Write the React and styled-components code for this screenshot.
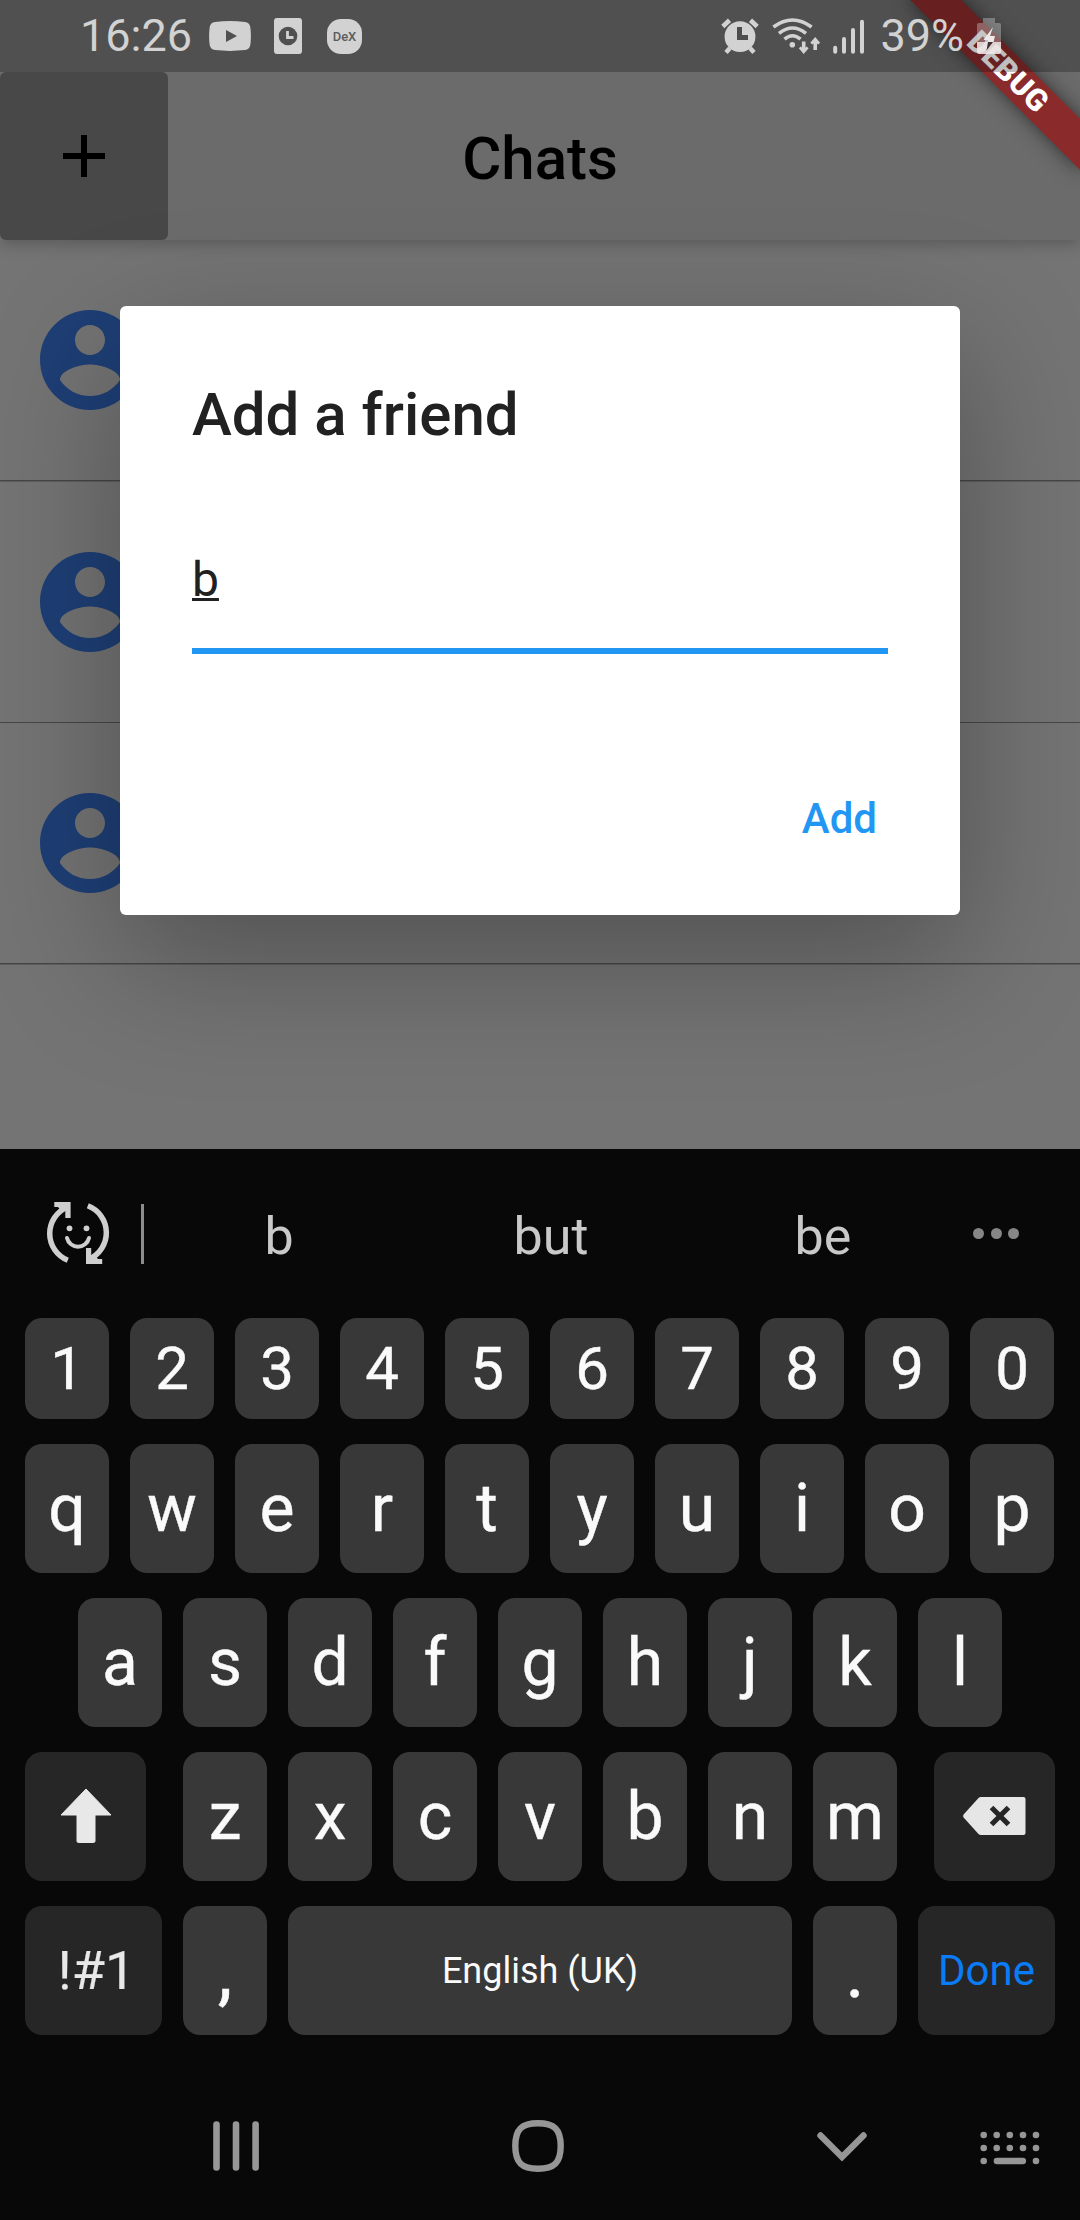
import React from "react";
import styled, { createGlobalStyle } from "styled-components";

const GlobalStyle = createGlobalStyle`
  * { box-sizing: border-box; }
  body { margin: 0; background: #080808; font-family: Roboto, "Liberation Sans", sans-serif; }
  svg { flex: none; display: block; }
`;

const Phone = styled.div`
  width: 1080px;
  height: 2220px;
  display: flex;
  flex-direction: column;
  background: #080808;
  overflow: hidden;
`;

const Screen = styled.main`
  position: relative;
  height: 1149px;
  overflow: hidden;
  background: #747474;
`;

/* ---------- app bar and list ---------- */

const AppBar = styled.header`
  position: relative;
  display: grid;
  grid-template-columns: 168px 1fr 168px;
  height: 240px;
  padding-top: 72px;
  background: #6b6b6b;
  box-shadow: 0 4px 14px rgba(0, 0, 0, 0.22);
`;

const AddButton = styled.button`
  display: grid;
  place-items: center;
  padding: 0;
  border: 0;
  border-radius: 6px;
  background: #484848;
`;

const BarTitle = styled.h1`
  margin: 0;
  padding-top: 5px;
  font-size: 60px;
  font-weight: 500;
  line-height: 163px;
  text-align: center;
  color: #000;
`;

const ChatRow = styled.div`
  display: flex;
  align-items: center;
  height: 240px;
  padding-left: 30px;
`;

const ChatDivider = styled.div`
  height: 2px;
  margin-bottom: -0.5px;
  background: linear-gradient(#464646 50%, ${(p) => (p.$thin ? "#747474" : "#5e5e5e")} 50%);
`;

/* ---------- dialog ---------- */

const Dialog = styled.section`
  position: absolute;
  left: 120px;
  top: 306px;
  width: 840px;
  height: 609px;
  display: flex;
  flex-direction: column;
  padding: 72px 72px 60px;
  border-radius: 6px;
  background: #fff;
  box-shadow: 0 44px 136px rgba(0, 0, 0, 0.3);
`;

const DialogTitle = styled.h2`
  flex: none;
  margin: 0;
  font-size: 60px;
  font-weight: 500;
  line-height: 73px;
  color: #212121;
`;

const Field = styled.div`
  flex: none;
  height: 131px;
  margin-top: 72px;
  padding-top: 29px;
  border-bottom: 6px solid #2196f3;
  font-size: 48px;
  line-height: 56px;
  color: #212121;
`;

const Typed = styled.span`
  text-decoration: underline;
  text-decoration-thickness: 3px;
  text-underline-offset: 2px;
  text-decoration-skip-ink: none;
`;

const Actions = styled.div`
  flex: none;
  display: flex;
  justify-content: flex-end;
  margin-top: 137px;
  padding-right: 11px;
`;

const TextButton = styled.button`
  padding: 0;
  border: 0;
  background: none;
  font: 500 42px/56px Roboto, "Liberation Sans", sans-serif;
  color: #2196f3;
`;

/* ---------- overlays ---------- */

const DebugBanner = styled.div`
  position: absolute;
  left: 960px;
  top: 84px;
  width: 240px;
  height: 36px;
  transform: rotate(45deg);
  transform-origin: 120px -84px;
  background: #8a2a2b;
  box-shadow: 0 0 20px rgba(0, 0, 0, 0.55);
  color: #fff;
  font-size: 30.6px;
  font-weight: 900;
  line-height: 36px;
  letter-spacing: 0.5px;
  text-align: center;
`;

const StatusBar = styled.div`
  position: absolute;
  inset: 0 0 auto 0;
  display: flex;
  justify-content: space-between;
  height: 72px;
  padding: 18px 79px 18px 80px;
  background: rgba(0, 0, 0, 0.25);
  color: #d2d2d2;
`;

const StatusGroup = styled.div`
  display: flex;
  align-items: center;
  height: 36px;
  gap: ${(p) => p.$gap}px;
`;

const StatusText = styled.span`
  font-size: 45px;
  line-height: 38px;
  width: ${(p) => p.$w}px;
  padding-left: ${(p) => p.$lead || 0}px;
  white-space: nowrap;
`;

const DexBadge = styled.span`
  width: 35px;
  height: 35px;
  border-radius: 14px;
  background: #d2d2d2;
  color: #5c5c5c;
  font-size: 13px;
  font-weight: 500;
  line-height: 36px;
  text-align: center;
`;

/* ---------- keyboard ---------- */

const Keyboard = styled.section`
  display: flex;
  flex-direction: column;
  gap: 25px;
  height: 886px;
`;

const Suggestions = styled.div`
  display: grid;
  grid-template-columns: 97px 272px 272px 272px 1fr;
  align-items: center;
  height: 144px;
  padding: 26px 0 0 46px;
`;

const SuggestTool = styled.div`
  display: flex;
  align-items: center;
  gap: 29px;
`;

const Separator = styled.i`
  flex: none;
  width: 3px;
  height: 60px;
  background: #8c8c8c;
`;

const Suggestion = styled.span`
  padding-top: 5px;
  font-size: 52px;
  line-height: 60px;
  text-align: center;
  color: #c9c9c9;
`;

const More = styled.span`
  display: flex;
  gap: 6.5px;
  padding: 0 0 1px 14px;
`;

const Dot = styled.i`
  width: 11px;
  height: 11px;
  border-radius: 50%;
  background: #868686;
`;

const KeyRow = styled.div`
  display: flex;
  justify-content: space-between;
  height: ${(p) => p.$h || 129}px;
  padding: 0 ${(p) => p.$right || 25}px 0 ${(p) => p.$left || 25}px;
`;

const Cluster = styled.div`
  display: flex;
  gap: 21px;
`;

const Key = styled.span`
  display: flex;
  align-items: center;
  justify-content: center;
  width: ${(p) => p.$w || 84}px;
  padding-top: ${(p) => p.$drop || 0}px;
  padding-left: ${(p) => p.$lead || 0}px;
  border-radius: 17px;
  background: ${(p) => (p.$fn ? "#262626" : "#383838")};
  color: ${(p) => p.$color || "#fafafa"};
  font-size: ${(p) => p.$size || 66}px;
  line-height: 1.172;
  -webkit-text-stroke: ${(p) => p.$stroke ?? 0.4}px currentColor;
`;

/* ---------- navigation ---------- */

const NavBar = styled.nav`
  display: flex;
  align-items: center;
  height: 185px;
  padding: 52px 40px 15px 212px;
`;

const NavItem = styled.span`
  display: flex;
  padding-top: ${(p) => p.$drop || 0}px;
  margin-right: ${(p) => p.$after || 0}px;
`;

const PlusIcon = () => (
  <svg width="42" height="42" viewBox="0 0 42 42">
    <path d="M18 0h6v18h18v6H24v18h-6V24H0v-6h18z" fill="#000" />
  </svg>
);

const AvatarIcon = () => (
  <svg width="120" height="120" viewBox="0 0 24 24">
    <path
      fill="#1e3f76"
      d="M12 2C6.48 2 2 6.48 2 12s4.48 10 10 10 10-4.48 10-10S17.52 2 12 2zm0 3c1.66 0 3 1.34 3 3s-1.34 3-3 3-3-1.34-3-3 1.34-3 3-3zm0 14.2c-2.5 0-4.71-1.28-6-3.22.03-1.99 4-3.08 6-3.08 1.99 0 5.97 1.09 6 3.08-1.29 1.94-3.5 3.22-6 3.22z"
    />
  </svg>
);

const VideoIcon = () => (
  <svg width="42" height="30" viewBox="0 0 42 30">
    <path
      fill="#d2d2d2"
      fillRule="evenodd"
      d="M6 .9Q21-.7 36 .9Q40.500 1.500 41.300 6Q42.500 15 41.300 24Q40.500 28.500 36 29.100Q21 30.700 6 29.100Q1.500 28.500.7 24Q-.5 15 .7 6Q1.500 1.500 6 .9ZM17 9v12l11-6z"
    />
  </svg>
);

const PageClockIcon = () => (
  <svg width="31" height="36" viewBox="0 0 31 36">
    <rect width="28" height="36" rx="3" fill="#d2d2d2" />
    <circle cx="14" cy="18" r="9.300" fill="#505050" />
    <path d="M13.500 13v6.500h6" fill="none" stroke="#d2d2d2" strokeWidth="2.800" />
  </svg>
);

const AlarmIcon = () => (
  <svg width="39.500" height="36" viewBox="0 0 39.500 36">
    <path
      d="M1.800 8.500L8.500 2.200M36.200 8.500L29.500 2.200"
      stroke="#d2d2d2"
      strokeWidth="4.600"
    />
    <path d="M9 30l-4 4.500M29 30l4 4.500" stroke="#d2d2d2" strokeWidth="4.500" />
    <circle cx="19" cy="18.700" r="15.400" fill="#d2d2d2" />
    <path d="M18.500 9v10.500H27" fill="none" stroke="#4d4d4d" strokeWidth="5" />
  </svg>
);

const WifiIcon = () => (
  <svg width="49" height="37" viewBox="0 0 49 37">
    <g fill="none" stroke="#d2d2d2" strokeWidth="3.600">
      <path d="M1.400 9Q20.500-5 39.600 9" />
      <path d="M7 15.300Q20.500 4.700 34 15.300" />
      <path d="M12.500 21.200Q20.500 14.300 28.500 21.200" />
      <path d="M31.700 23.500V32M43.200 32V23" />
    </g>
    <circle cx="20.300" cy="26.700" r="2.800" fill="#d2d2d2" />
    <path
      d="M26.800 30.300l2-1.800 2.900 2.700 2.900-2.700 2 1.800-4.900 5.700zM38.300 24.800l2 1.800 2.900-2.700 2.900 2.700 2-1.800-4.900-5.700z"
      fill="#d2d2d2"
    />
  </svg>
);

const SignalIcon = () => (
  <svg width="31" height="36" viewBox="0 0 31 36">
    <path
      d="M2.200 29.800v4M11 21v12.800M20 12v21.800M29 3.800v30"
      stroke="#d2d2d2"
      strokeWidth="4"
      strokeLinecap="round"
    />
  </svg>
);

const BatteryIcon = () => (
  <svg width="24" height="36" viewBox="0 0 24 36">
    <path d="M6 0h12v5h4.500q1.500 0 1.500 1.500V24H0V6.500Q0 5 1.500 5H6z" fill="#d2d2d2" opacity=".38" />
    <path d="M0 24h24v10q0 2-2 2H2q-2 0-2-2z" fill="#efe8e8" opacity=".88" />
    <path d="M16 9L6.500 22h5l-1 2h6l1.500-6h-5z" fill="#efe9e9" />
    <path d="M11 24h5L9.500 32.500z" fill="#3c3030" />
  </svg>
);

const EmojiSwapIcon = () => (
  <svg width="66" height="66" viewBox="0 0 66 66">
    <g fill="none" stroke="#cfcfcf" strokeWidth="5.500">
      <path d="M21.800 59.200A28.700 28.700 0 0 1 21.500 6" />
      <path d="M41.800 4.800A28.700 28.700 0 0 1 43 58" />
    </g>
    <path
      fill="#cfcfcf"
      d="M8.300 1H24.600V17H19.300V9.500L16 11L12 6H8.300zM56.200 63H40V47H45.200V54.500L48 53L52 58H56.200z"
    />
    <circle cx="23.500" cy="27.300" r="2.900" fill="#cfcfcf" />
    <circle cx="40.500" cy="27.300" r="2.900" fill="#cfcfcf" />
    <path d="M21 37a11.300 11.300 0 0 0 22 0" fill="none" stroke="#cfcfcf" strokeWidth="4" strokeLinecap="round" />
  </svg>
);

const ShiftIcon = () => (
  <svg width="54" height="57" viewBox="0 0 54 57">
    <path
      d="M27 1L52 27H36V53q0 1.500-1.500 1.500h-15q-1.500 0-1.500-1.500V27H2z"
      fill="#e8e8e8"
      stroke="#e8e8e8"
      strokeLinejoin="round"
    />
  </svg>
);

const DeleteIcon = () => (
  <svg width="63" height="39" viewBox="0 0 63 39">
    <path d="M18 0H60.500Q62.500 0 62.500 2V36Q62.500 38 60.500 38H18Q16.500 38 15.500 37L.6 20.500Q-.4 19 .6 17.500L15.500 1Q16.500 0 18 0z" fill="#e6e6e6" />
    <path d="M28.500 10.500l17 17M45.500 10.500l-17 17" stroke="#262626" strokeWidth="5.200" />
  </svg>
);

const RecentsIcon = () => (
  <svg width="48" height="52" viewBox="0 0 48 52">
    <path d="M4.500 4.600v42.800M24 4.600v42.800M43.600 4.600v42.800" stroke="#969696" strokeWidth="6.600" strokeLinecap="round" />
  </svg>
);

const HomeIcon = () => (
  <svg width="52" height="52" viewBox="0 0 52 52">
    <path
      d="M26 3.300C42 3.300 48.700 9 48.700 26S42 48.700 26 48.700 3.300 43 3.300 26 10 3.300 26 3.300z"
      fill="none"
      stroke="#969696"
      strokeWidth="6.400"
    />
  </svg>
);

const HideIcon = () => (
  <svg width="50" height="30" viewBox="0 0 50 30">
    <path d="M3.500 3.500L25 25 46.500 3.500" fill="none" stroke="#969696" strokeWidth="6.400" strokeLinecap="round" />
  </svg>
);

const KeyboardIcon = () => (
  <svg width="60" height="34" viewBox="0 0 60 34">
    {[4, 17].map((y) =>
      [3.7, 16.7, 29.8, 43, 56].map((x) => (
        <circle key={`${x}-${y}`} cx={x} cy={y} r="3.300" fill="#969696" />
      ))
    )}
    <circle cx="3.700" cy="30" r="3.300" fill="#969696" />
    <circle cx="56" cy="30" r="3.300" fill="#969696" />
    <rect x="13.700" y="26.700" width="32.400" height="6.600" rx="3.300" fill="#969696" />
  </svg>
);

const Letters = ({ chars, size, drop }) =>
  chars.split("").map((c) => (
    <Key key={c} $size={size} $drop={drop}>
      {c}
    </Key>
  ));

export default function App() {
  return (
    <Phone>
      <GlobalStyle />
      <Screen>
        <AppBar>
          <AddButton>
            <PlusIcon />
          </AddButton>
          <BarTitle>Chats</BarTitle>
        </AppBar>
        {[0, 1, 2].map((n) => (
          <React.Fragment key={n}>
            <ChatRow>
              <AvatarIcon />
            </ChatRow>
            <ChatDivider $thin={n === 1} />
          </React.Fragment>
        ))}

        <Dialog>
          <DialogTitle>Add a friend</DialogTitle>
          <Field>
            <Typed>b</Typed>
          </Field>
          <Actions>
            <TextButton>Add</TextButton>
          </Actions>
        </Dialog>

        <DebugBanner>DEBUG</DebugBanner>

        <StatusBar>
          <StatusGroup $gap={22.5}>
            <StatusText $w={106.5}>16:26</StatusText>
            <VideoIcon />
            <PageClockIcon />
            <DexBadge>DeX</DexBadge>
          </StatusGroup>
          <StatusGroup $gap={11.5}>
            <AlarmIcon />
            <WifiIcon />
            <SignalIcon />
            <StatusText $w={90.5} $lead={5.5}>
              39%
            </StatusText>
            <BatteryIcon />
          </StatusGroup>
        </StatusBar>
      </Screen>

      <Keyboard>
        <Suggestions>
          <SuggestTool>
            <EmojiSwapIcon />
            <Separator />
          </SuggestTool>
          <Suggestion>b</Suggestion>
          <Suggestion>but</Suggestion>
          <Suggestion>be</Suggestion>
          <More>
            <Dot />
            <Dot />
            <Dot />
          </More>
        </Suggestions>
        <KeyRow $h={101} $right={26}>
          <Letters chars="1234567890" size={60} drop={1} />
        </KeyRow>
        <KeyRow $right={26}>
          <Letters chars="qwertyuiop" />
        </KeyRow>
        <KeyRow $left={78} $right={78}>
          <Letters chars="asdfghjkl" />
        </KeyRow>
        <KeyRow>
          <Key $fn $w={121}>
            <ShiftIcon />
          </Key>
          <Cluster>
            <Letters chars="zxcvbnm" />
          </Cluster>
          <Key $fn $w={121}>
            <DeleteIcon />
          </Key>
        </KeyRow>
        <KeyRow>
          <Key $fn $w={137} $size={54} $lead={6} $color="#e8e8e8" $stroke={0.2}>
            !#1
          </Key>
          <Key $size={74} $drop={3}>
            ,
          </Key>
          <Key $w={504} $size={36} $drop={1} $stroke={0}>
            English (UK)
          </Key>
          <Key $size={74} $drop={3}>
            .
          </Key>
          <Key $fn $w={137} $size={42} $color="#0a7cf5" $stroke={0}>
            Done
          </Key>
        </KeyRow>
      </Keyboard>

      <NavBar>
        <NavItem $after={252}>
          <RecentsIcon />
        </NavItem>
        <NavItem $after={252.5}>
          <HomeIcon />
        </NavItem>
        <NavItem $after={113.5} $drop={2}>
          <HideIcon />
        </NavItem>
        <NavItem $drop={4}>
          <KeyboardIcon />
        </NavItem>
      </NavBar>
    </Phone>
  );
}
